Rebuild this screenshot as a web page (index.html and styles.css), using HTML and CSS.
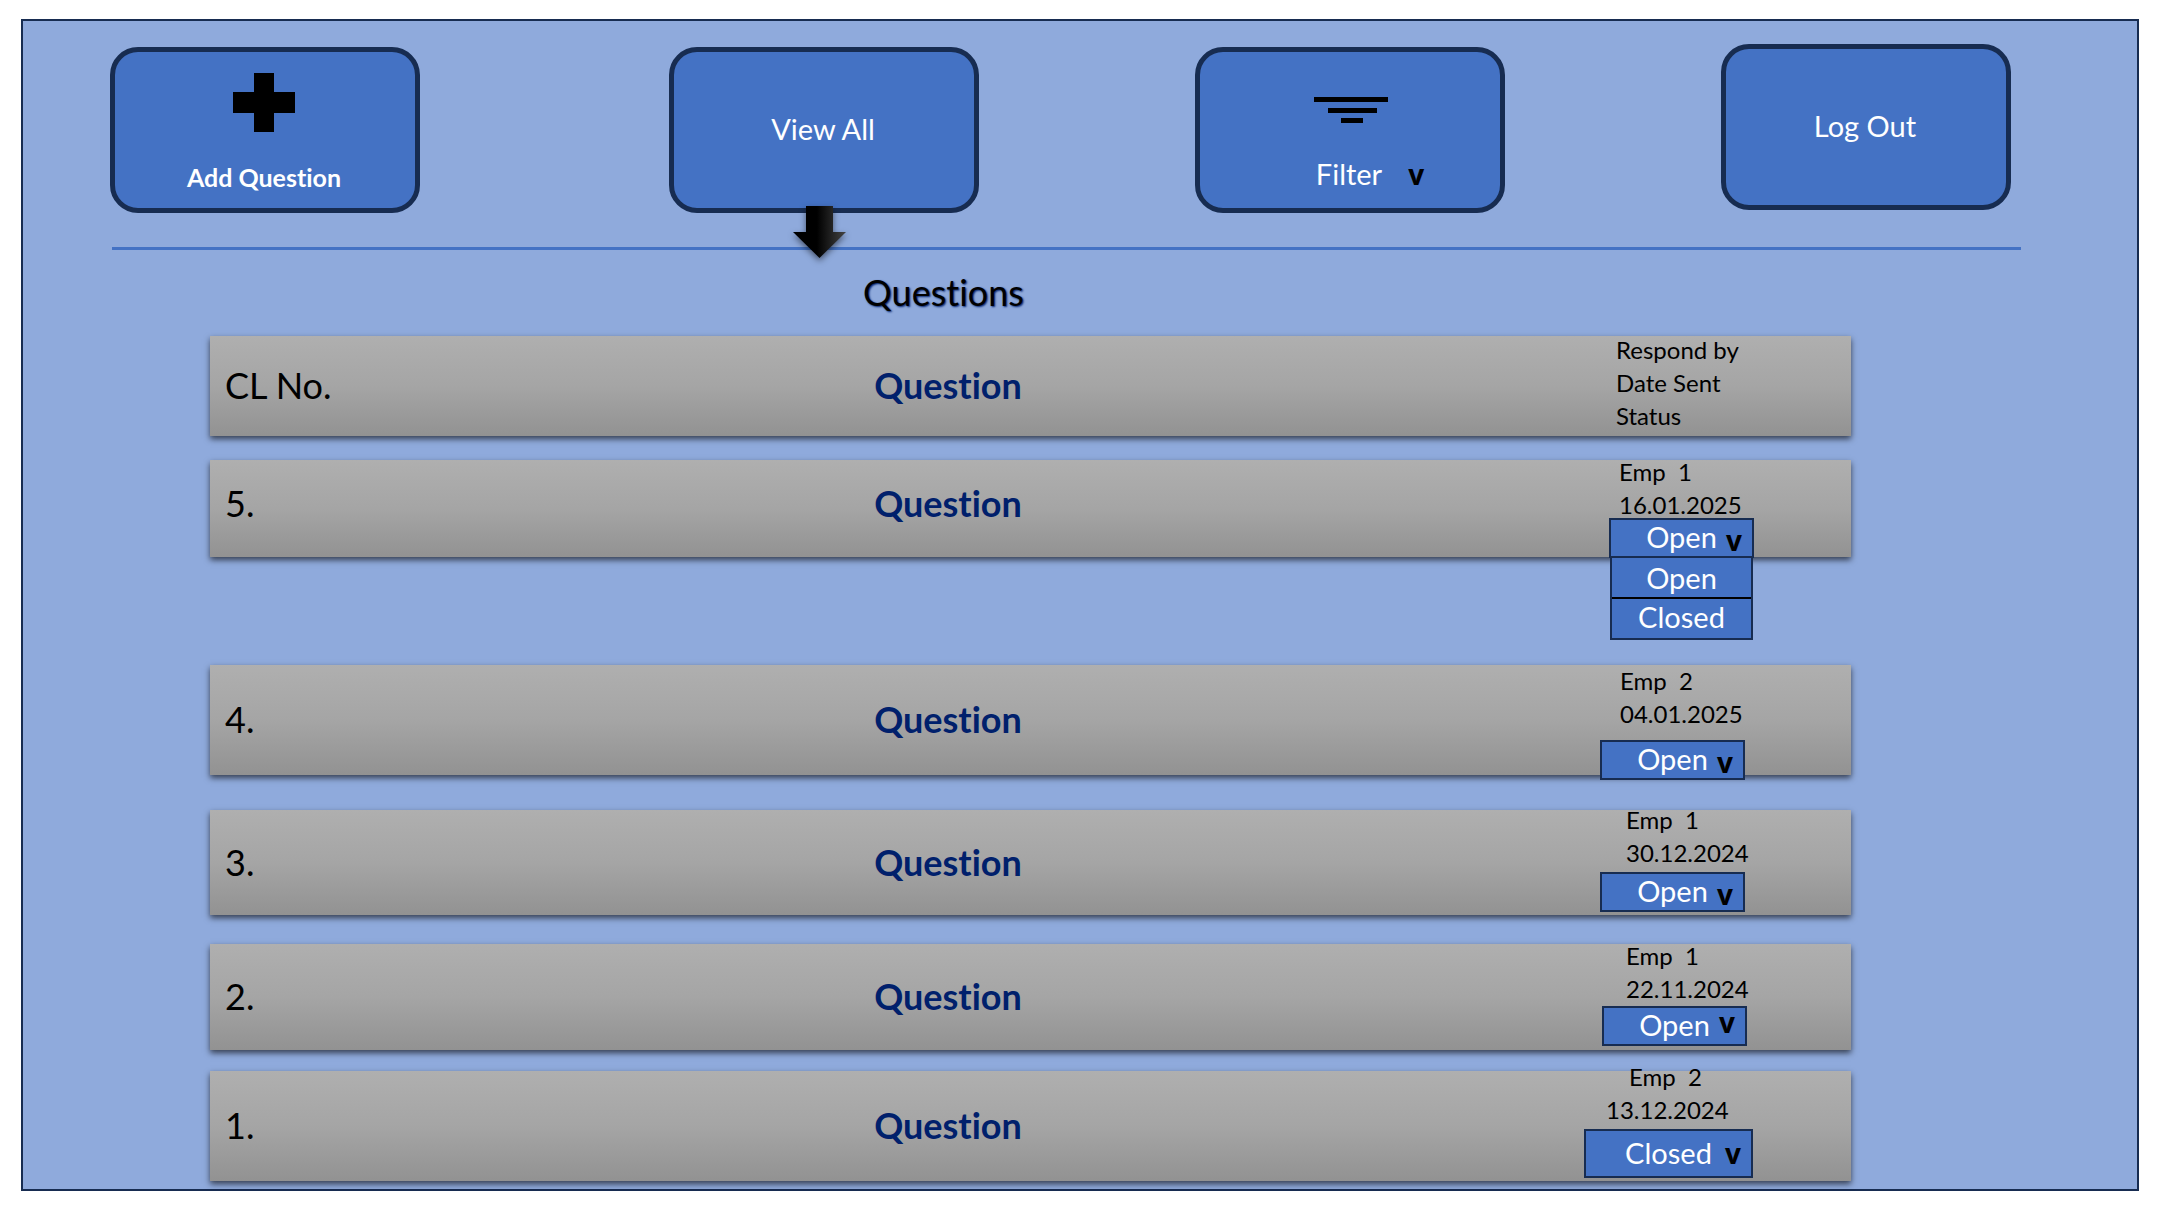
FILE: index.html
```html
<!DOCTYPE html>
<html lang="en">
<head>
<meta charset="utf-8">
<meta name="viewport" content="width=device-width, initial-scale=1">
<title>Questions</title>
<link rel="stylesheet" href="styles.css">
</head>
<body>
<main class="panel">
  <nav class="toolbar">
    <button type="button" class="tile tile-add">
      <svg class="icon-plus" width="62" height="59" viewBox="0 0 62 59" aria-hidden="true"><path d="M21 0h20v19h21v21H41v19H21V40H0V19h21z"/></svg>
      <span>Add Question</span>
    </button>
    <div class="view-all">
      <button type="button" class="tile">View All</button>
      <svg class="arrow" width="53" height="52" viewBox="0 0 53 52" aria-hidden="true">
        <defs><linearGradient id="arrow-fill" x1="0" x2="1"><stop offset="0.45" stop-color="#000"/><stop offset="1" stop-color="#444"/></linearGradient></defs>
        <path fill="url(#arrow-fill)" d="M13 0h27v26h13L26.500 52 0 26h13z"/>
      </svg>
    </div>
    <button type="button" class="tile tile-filter">
      <svg width="74" height="26" viewBox="0 0 74 26" aria-hidden="true"><path d="M0 0h74v5H0zM14 11h49v5H14zM27 21h22v5H27z"/></svg>
      <span class="filter-label"><span class="filter-text">Filter</span><span class="filter-caret">v</span></span>
    </button>
    <button type="button" class="tile tile-logout">Log Out</button>
  </nav>
  <hr class="divider">
  <section class="questions">
    <h1 class="title">Questions</h1>
    <table class="list">
      <thead>
        <tr class="row row-head">
          <th class="number" scope="col">CL No.</th>
          <th class="question" scope="col">Question</th>
          <th class="meta" scope="col"><span class="line">Respond by</span><span class="line">Date Sent</span><span class="line">Status</span></th>
        </tr>
      </thead>
      <tbody>
        <tr class="row row-5">
          <td class="number">5.</td>
          <td class="question">Question</td>
          <td class="meta">
            <span class="line">Emp  1</span><span class="line">16.01.2025</span>
            <div class="status">
              <select class="select" aria-label="Status of question 5"><option selected>Open</option><option>Closed</option></select>
              <span class="caret" aria-hidden="true">v</span>
              <ul class="menu">
                <li><button type="button" class="option">Open</button></li>
                <li><button type="button" class="option">Closed</button></li>
              </ul>
            </div>
          </td>
        </tr>
        <tr class="row row-4">
          <td class="number">4.</td>
          <td class="question">Question</td>
          <td class="meta">
            <span class="line">Emp  2</span><span class="line">04.01.2025</span>
            <div class="status">
              <select class="select" aria-label="Status of question 4"><option selected>Open</option><option>Closed</option></select>
              <span class="caret" aria-hidden="true">v</span>
            </div>
          </td>
        </tr>
        <tr class="row row-3">
          <td class="number">3.</td>
          <td class="question">Question</td>
          <td class="meta">
            <span class="line">Emp  1</span><span class="line">30.12.2024</span>
            <div class="status">
              <select class="select" aria-label="Status of question 3"><option selected>Open</option><option>Closed</option></select>
              <span class="caret" aria-hidden="true">v</span>
            </div>
          </td>
        </tr>
        <tr class="row row-2">
          <td class="number">2.</td>
          <td class="question">Question</td>
          <td class="meta">
            <span class="line">Emp  1</span><span class="line">22.11.2024</span>
            <div class="status">
              <select class="select" aria-label="Status of question 2"><option selected>Open</option><option>Closed</option></select>
              <span class="caret" aria-hidden="true">v</span>
            </div>
          </td>
        </tr>
        <tr class="row row-1">
          <td class="number">1.</td>
          <td class="question">Question</td>
          <td class="meta">
            <span class="line assignee">Emp  2</span><span class="line">13.12.2024</span>
            <div class="status">
              <select class="select" aria-label="Status of question 1"><option>Open</option><option selected>Closed</option></select>
              <span class="caret" aria-hidden="true">v</span>
            </div>
          </td>
        </tr>
      </tbody>
    </table>
  </section>
</main>
</body>
</html>
```

FILE: styles.css
```css
:root {
  --navy: #172c51;
  --blue: #4472c4;
  --sky: #8faadc;
}

* { box-sizing: border-box; }

body {
  margin: 0;
  padding: 19px 21px 24px;
  background: #fff;
  color: #000;
  font-family: Lato, "Open Sans", sans-serif;
  font-size: 24px;
  font-variant-ligatures: none;
}

button, select {
  font-family: inherit;
  font-variant-ligatures: none;
}

.panel {
  border: 2px solid var(--navy);
  background: var(--sky);
  padding: 23px 0 8px;
}

/* Toolbar */
.toolbar {
  display: grid;
  grid-template-columns: 559fr 526fr 526fr 290px;
  align-items: end;
  padding: 0 126px 0 87px;
}

.tile {
  display: flex;
  flex-direction: column;
  align-items: center;
  justify-content: center;
  width: 310px;
  height: 166px;
  padding: 0 2px 2px 0;
  border: 5px solid var(--navy);
  border-radius: 28px;
  background: var(--blue);
  color: #fff;
  font-size: 29px;
  line-height: 34px;
}

.tile-add {
  justify-content: flex-start;
  gap: 28px;
  padding-top: 21px;
  font-size: 25px;
  font-weight: 700;
}

.tile-filter {
  justify-content: flex-start;
  gap: 34px;
  padding: 45px 0 0 2px;
}

.tile-logout {
  width: 290px;
  margin-bottom: 3px;
}

.filter-label {
  display: grid;
  grid-template-columns: 1fr auto 1fr;
  width: 100%;
  padding-right: 4px;
}

.filter-text { grid-column: 2; }

.filter-caret, .caret {
  color: #000;
  font-family: "Open Sans", sans-serif;
  font-size: 28px;
  font-weight: 700;
  line-height: 34px;
}

.filter-caret {
  margin-left: 26px;
  text-align: left;
}

.view-all { position: relative; }

.arrow {
  position: absolute;
  top: 159px;
  left: 124px;
  filter: drop-shadow(0 3px 3px rgba(0, 0, 0, 0.5));
}

.divider {
  height: 3px;
  margin: 34px 116px 0 89px;
  border: 0;
  background: var(--blue);
}

/* Question list */
.questions { padding: 20px 286px 0 187px; }

.title {
  margin: 0 0 22px;
  padding-right: 174px;
  font-size: 36px;
  font-weight: 400;
  line-height: 44px;
  text-align: center;
  text-shadow: 1px 1px 2px #00206c;
}

.list, .list thead, .list tbody { display: block; }

.row {
  display: grid;
  grid-template-columns: 100px 1fr 265px;
  background: linear-gradient(#afafaf, #a5a5a5 50%, #929292);
  box-shadow: 0 3px 6px rgba(0, 0, 0, 0.63);
}

.number, .question {
  display: flex;
  align-items: center;
  padding: 0 0 2px;
  font-size: 36px;
  line-height: 44px;
  white-space: nowrap;
}

.number {
  padding-left: 15px;
  font-weight: 400;
}

.question {
  justify-content: center;
  color: #00206c;
  font-weight: 700;
}

.meta {
  display: flex;
  flex-direction: column;
  align-items: flex-start;
  padding: 0 0 0 30px;
  font-weight: 400;
}

.line {
  line-height: 33px;
  white-space: pre;
}

.status {
  position: relative;
  display: grid;
  width: 145px;
}

.select {
  appearance: none;
  width: 100%;
  height: 40px;
  padding: 0 0 2px;
  border: 2px solid var(--navy);
  border-radius: 0;
  background: var(--blue);
  color: #fff;
  font-size: 29px;
  line-height: 34px;
  text-align: center;
  text-align-last: center;
}

.caret {
  position: absolute;
  top: 5px;
  right: 12px;
  pointer-events: none;
}

.menu {
  position: absolute;
  z-index: 1;
  top: 38px;
  left: 1px;
  right: 1px;
  margin: 0;
  padding: 0;
  border: 2px solid var(--navy);
  background: var(--blue);
  list-style: none;
}

.menu li + li { border-top: 2px solid #000; }

.option {
  display: block;
  width: 100%;
  height: 39px;
  padding: 0 0 4px;
  border: 0;
  background: none;
  color: #fff;
  font-size: 29px;
  line-height: 34px;
}

.menu li:first-child .option { padding: 0; }

.row-head .meta { margin: -3px 0 4px; }

.row-5 { margin-top: 24px; }
.row-5 .number, .row-5 .question { padding-bottom: 12px; }
.row-5 .meta { margin-top: -5px; padding-left: 33px; }
.row-5 .status { margin: -3px 0 -1px -10px; }

.row-4 { margin-top: 108px; }
.row-4 .meta { margin: -1px 0 -5px; padding-left: 34px; }
.row-4 .status { margin: 10px 0 0 -20px; }

.row-3 { margin-top: 35px; }
.row-3 .meta { margin: -7px 0 3px; padding-left: 40px; }
.row-3 .status { margin: 3px 0 0 -26px; }

.row-2 { margin-top: 29px; }
.row-2 .meta { margin: -5px 0 4px; padding-left: 40px; }
.row-2 .status { margin: 1px 0 0 -24px; }
.row-2 .caret { top: -1px; }

.row-1 { margin-top: 21px; }
.row-1 .meta { margin: -11px 0 3px; padding-left: 20px; }
.row-1 .assignee { padding-left: 23px; }
.row-1 .status { width: 169px; margin: 3px 0 0 -22px; }
.row-1 .select { height: 49px; }
.row-1 .caret { top: 7px; }
```
